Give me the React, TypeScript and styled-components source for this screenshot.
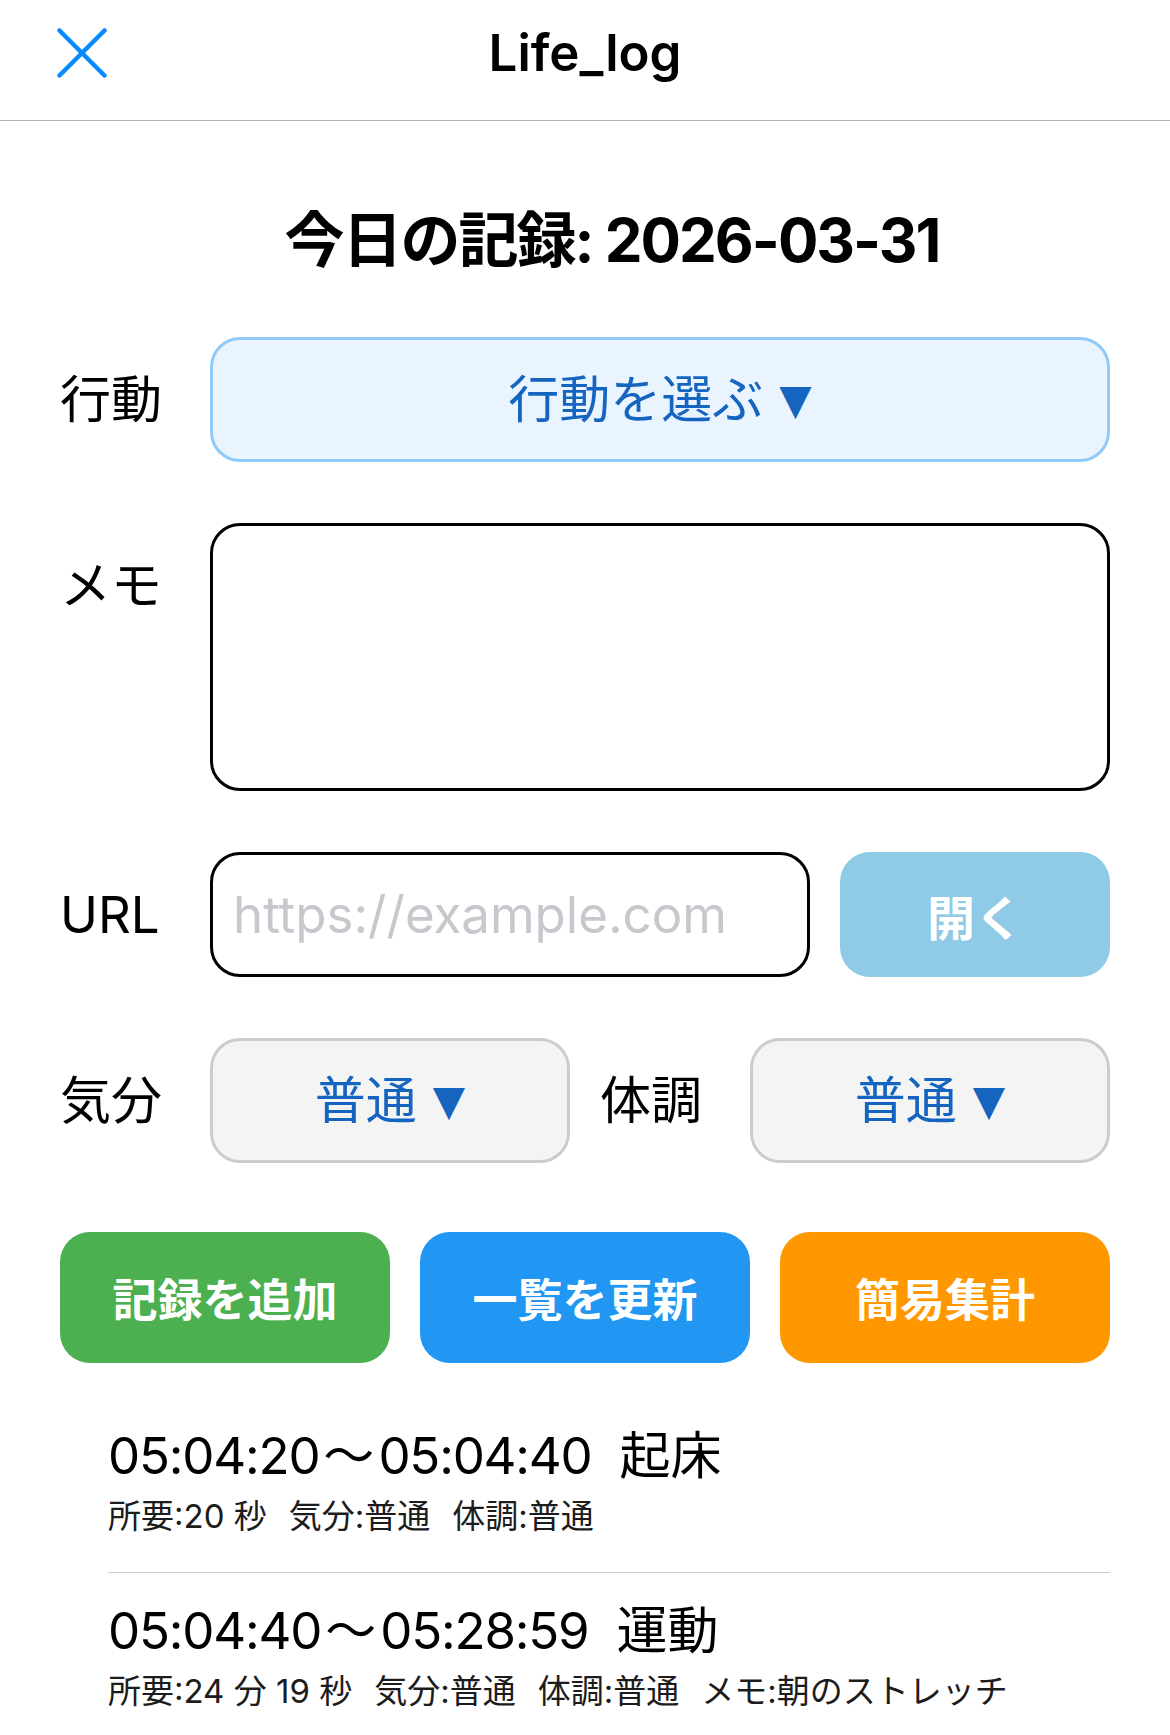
import styled, {createGlobalStyle} from 'styled-components'

const GlobalStyle = createGlobalStyle`
  html, body {
    margin: 0;
    padding: 0;
    background: #ffffff;
  }
  body {
    font-family: Inter, "Noto Sans CJK JP", sans-serif;
    color: #000000;
    -webkit-font-smoothing: antialiased;
  }
  * {
    box-sizing: border-box;
  }
`

const Header = styled.header`
  height: 121px;
  display: grid;
  grid-template-columns: 1fr auto 1fr;
  align-items: center;
  padding-bottom: 14px;
  border-bottom: 1px solid #b3b3b3;
`

const CloseButton = styled.button`
  justify-self: start;
  display: flex;
  margin: 0 0 0 57px;
  padding: 0;
  border: none;
  background: none;
  cursor: pointer;
`

const Title = styled.h1`
  margin: 0;
  font-size: 51px;
  font-weight: 600;
  line-height: 1.2;
`

const Main = styled.main`
  padding: 0 60px;
`

const Heading = styled.h2`
  margin: 83px 0 61px;
  padding-left: 54px;
  text-align: center;
  font-size: 60px;
  font-weight: 700;
  line-height: 72px;
  letter-spacing: -2px;
`

const Form = styled.div`
  display: flex;
  flex-direction: column;
  gap: 61px;
`

const Row = styled.div`
  display: flex;
  align-items: flex-start;
`

const Label = styled.div<{$inset?: boolean}>`
  width: 150px;
  height: 125px;
  flex-shrink: 0;
  display: flex;
  align-items: center;
  margin-left: ${({$inset}) => $inset ? '30px' : '0'};
  font-size: 51px;
  line-height: 1;
`

const SelectButton = styled.button<{$accent?: boolean}>`
  flex: 1;
  height: 125px;
  display: flex;
  align-items: center;
  justify-content: center;
  padding: 0;
  border: 3px solid ${({$accent}) => $accent ? '#90caf9' : '#cccccc'};
  border-radius: 30px;
  background: ${({$accent}) => $accent ? '#e9f4fe' : '#f4f4f4'};
  color: #1565c0;
  font: inherit;
  font-size: 51px;
  line-height: 1;
  cursor: pointer;
`

const Caret = styled.span`
  margin-left: 16px;
  font-family: "DejaVu Sans", sans-serif;
  font-size: 42px;
`

const MemoBox = styled.textarea`
  flex: 1;
  height: 268px;
  padding: 24px;
  border: 3px solid #000000;
  border-radius: 30px;
  font: inherit;
  font-size: 51px;
  resize: none;
  outline: none;
`

const UrlInput = styled.input`
  flex: 1;
  min-width: 0;
  height: 125px;
  padding: 0 20px;
  border: 3px solid #000000;
  border-radius: 30px;
  font: inherit;
  font-size: 51px;
  outline: none;

  &::placeholder {
    color: #c7c7cd;
  }
`

const OpenButton = styled.button`
  width: 270px;
  height: 125px;
  margin-left: 30px;
  border: none;
  border-radius: 30px;
  background: #8fcae6;
  color: #ffffff;
  font: inherit;
  font-size: 48px;
  font-weight: 600;
  cursor: pointer;
`

const ButtonRow = styled.div`
  display: grid;
  grid-template-columns: repeat(3, 1fr);
  gap: 30px;
  margin-top: 8px;
`

const ActionButton = styled.button<{$color: string}>`
  height: 131px;
  border: none;
  border-radius: 30px;
  background: ${({$color}) => $color};
  color: #ffffff;
  font: inherit;
  font-size: 45px;
  font-weight: 700;
  cursor: pointer;
`

const List = styled.ul`
  list-style: none;
  margin: 35px 0 0 48px;
  padding: 0;
`

const Item = styled.li`
  padding: 27px 0;
  border-bottom: 1px solid #cccccc;
`

const TimeLine = styled.div`
  font-size: 51px;
  line-height: 62px;
  letter-spacing: -1.2px;
  white-space: nowrap;
`

const Tilde = styled.span`
  margin: 0 4px;
  letter-spacing: 0;
`

const Activity = styled.span`
  margin-left: 28px;
  letter-spacing: 0;
`

const Meta = styled.div`
  display: flex;
  gap: 22px;
  font-size: 33px;
  line-height: 58px;
  color: #1c1c1c;
  white-space: nowrap;
`

const CloseIcon = () => (
  <svg width="50" height="50" viewBox="0 0 50 50" fill="none"
    stroke="#0a8aff" strokeWidth="4.5" strokeLinecap="round">
    <path d="M2.5 2.5 47.5 47.5M47.5 2.5 2.5 47.5" />
  </svg>
)

const records = [
  {start: '05:04:20', end: '05:04:40', activity: '起床',
    meta: ['所要:20 秒', '気分:普通', '体調:普通']},
  {start: '05:04:40', end: '05:28:59', activity: '運動',
    meta: ['所要:24 分 19 秒', '気分:普通', '体調:普通', 'メモ:朝のストレッチ']},
]

const actions = [
  {label: '記録を追加', color: '#4caf50'},
  {label: '一覧を更新', color: '#2196f3'},
  {label: '簡易集計', color: '#ff9800'},
]

export default function App() {
  return (
    <>
      <GlobalStyle />
      <Header>
        <CloseButton aria-label="close"><CloseIcon /></CloseButton>
        <Title>Life_log</Title>
      </Header>
      <Main>
        <Heading>今日の記録: 2026-03-31</Heading>
        <Form>
          <Row>
            <Label>行動</Label>
            <SelectButton $accent>行動を選ぶ<Caret>▼</Caret></SelectButton>
          </Row>
          <Row>
            <Label>メモ</Label>
            <MemoBox />
          </Row>
          <Row>
            <Label>URL</Label>
            <UrlInput placeholder="https://example.com" />
            <OpenButton>開く</OpenButton>
          </Row>
          <Row>
            <Label>気分</Label>
            <SelectButton>普通<Caret>▼</Caret></SelectButton>
            <Label $inset>体調</Label>
            <SelectButton>普通<Caret>▼</Caret></SelectButton>
          </Row>
          <ButtonRow>
            {actions.map(a => (
              <ActionButton key={a.label} $color={a.color}>{a.label}</ActionButton>
            ))}
          </ButtonRow>
        </Form>
        <List>
          {records.map(r => (
            <Item key={r.start}>
              <TimeLine>
                {r.start}<Tilde>〜</Tilde>{r.end}<Activity>{r.activity}</Activity>
              </TimeLine>
              <Meta>
                {r.meta.map(m => <span key={m}>{m}</span>)}
              </Meta>
            </Item>
          ))}
        </List>
      </Main>
    </>
  )
}
